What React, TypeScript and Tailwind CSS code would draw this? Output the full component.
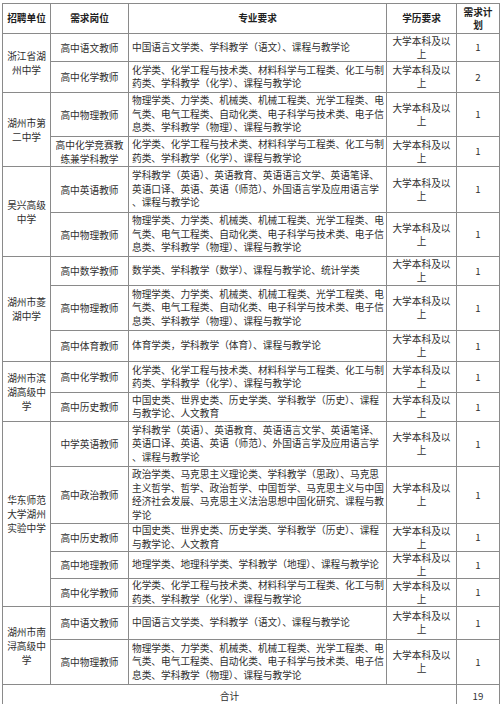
import React from 'react';

// 重复使用的专业要求
const HUAXUE = ['化学类、化学工程与技术类、材料科学与工程类、化工与制', '药类、学科教学（化学）、课程与教学论'];
const WULI = [
  '物理学类、力学类、机械类、机械工程类、光学工程类、电',
  '气类、电气工程类、自动化类、电子科学与技术类、电子信',
  '息类、学科教学（物理）、课程与教学论',
];
const YINGYU = [
  '学科教学（英语）、英语教育、英语语言文学、英语笔译、',
  '英语口译、英语、英语（师范）、外国语言学及应用语言学',
  '、课程与教学论',
];
const YUWEN = ['中国语言文学类、学科教学（语文）、课程与教学论'];
const LISHI = ['中国史类、世界史类、历史学类、学科教学（历史）、课程', '与教学论、人文教育'];

type Job = {
  post: string[];
  major: string[];
  num: string;
  h: string;
};

type Unit = {
  name: string[];
  jobs: Job[];
};

const units: Unit[] = [
  {
    name: ['浙江省湖', '州中学'],
    jobs: [
      { post: ['高中语文教师'], major: YUWEN, num: '1', h: 'h-[28px]' },
      { post: ['高中化学教师'], major: HUAXUE, num: '2', h: 'h-[31px]' },
    ],
  },
  {
    name: ['湖州市第', '二中学'],
    jobs: [
      { post: ['高中物理教师'], major: WULI, num: '1', h: 'h-[44px]' },
      { post: ['高中化学竞赛教', '练兼学科教学'], major: HUAXUE, num: '1', h: 'h-[30px]' },
    ],
  },
  {
    name: ['吴兴高级', '中学'],
    jobs: [
      { post: ['高中英语教师'], major: YINGYU, num: '1', h: 'h-[46px]' },
      { post: ['高中物理教师'], major: WULI, num: '1', h: 'h-[44px]' },
    ],
  },
  {
    name: ['湖州市菱', '湖中学'],
    jobs: [
      { post: ['高中数学教师'], major: ['数学类、学科教学（数学）、课程与教学论、统计学类'], num: '1', h: 'h-[29px]' },
      { post: ['高中物理教师'], major: WULI, num: '1', h: 'h-[45px]' },
      { post: ['高中体育教师'], major: ['体育学类，学科教学（体育）、课程与教学论'], num: '1', h: 'h-[31px]' },
    ],
  },
  {
    name: ['湖州市滨', '湖高级中', '学'],
    jobs: [
      { post: ['高中化学教师'], major: HUAXUE, num: '1', h: 'h-[31px]' },
      { post: ['高中历史教师'], major: LISHI, num: '1', h: 'h-[29px]' },
    ],
  },
  {
    name: ['华东师范', '大学湖州', '实验中学'],
    jobs: [
      { post: ['中学英语教师'], major: YINGYU, num: '1', h: 'h-[45px]' },
      {
        post: ['高中政治教师'],
        major: [
          '政治学类、马克思主义理论类、学科教学（思政）、马克思',
          '主义哲学、哲学、政治哲学、中国哲学、马克思主义与中国',
          '经济社会发展、马克思主义法治思想中国化研究、课程与教',
          '学论',
        ],
        num: '1',
        h: 'h-[57px]',
      },
      { post: ['高中历史教师'], major: LISHI, num: '1', h: 'h-[26px]' },
      { post: ['高中地理教师'], major: ['地理学类、地理科学类、学科教学（地理）、课程与教学论'], num: '1', h: 'h-[26px]' },
      { post: ['高中化学教师'], major: HUAXUE, num: '1', h: 'h-[28px]' },
    ],
  },
  {
    name: ['湖州市南', '浔高级中', '学'],
    jobs: [
      { post: ['高中语文教师'], major: YUWEN, num: '1', h: 'h-[33px]' },
      { post: ['高中物理教师'], major: WULI, num: '1', h: 'h-[45px]' },
    ],
  },
];

const cell = 'border border-[#8a8a8a] p-0 align-middle';

function Lines({ lines, className }: { lines: string[]; className?: string }) {
  return (
    <>
      {lines.map((l, i) => (
        <div key={i} className={`whitespace-nowrap ${className ?? ''}`}>
          {l}
        </div>
      ))}
    </>
  );
}

export default function App() {
  return (
    <div className="w-[500px] h-[704px] overflow-hidden bg-white font-['Noto_Sans_CJK_SC','Microsoft_YaHei',sans-serif] text-[9.7px] text-[#2f2f2f]">
      <table className="mt-[3px] ml-[2px] w-[497px] table-fixed border-collapse">
        <colgroup>
          <col className="w-[48px]" />
          <col className="w-[78px]" />
          <col className="w-[258px]" />
          <col className="w-[70px]" />
          <col className="w-[43px]" />
        </colgroup>
        <thead>
          <tr className="h-[30px] font-bold text-[#1f1f1f]">
            <th className={`${cell} text-center leading-[13px]`}>招聘单位</th>
            <th className={`${cell} text-center leading-[13px]`}>需求岗位</th>
            <th className={`${cell} text-center leading-[13px]`}>专业要求</th>
            <th className={`${cell} text-center leading-[13px]`}>学历要求</th>
            <th className={`${cell} text-center leading-[13px]`}>
              <Lines lines={['需求计', '划']} />
            </th>
          </tr>
        </thead>
        <tbody>
          {units.map((u) =>
            u.jobs.map((j, i) => (
              <tr key={u.name.join('') + i} className={j.h}>
                {i === 0 && (
                  <td rowSpan={u.jobs.length} className={`${cell} text-center leading-[14px]`}>
                    <Lines lines={u.name} />
                  </td>
                )}
                <td className={`${cell} text-center leading-[14px]`}>
                  <Lines lines={j.post} />
                </td>
                <td className={`${cell} px-[3px] text-left leading-[13.5px]`}>
                  <Lines lines={j.major} />
                </td>
                <td className={`${cell} text-center leading-[13px]`}>
                  <Lines lines={['大学本科及以', '上']} />
                </td>
                <td className={`${cell} text-center`}>{j.num}</td>
              </tr>
            ))
          )}
          <tr className="h-[24px]">
            <td colSpan={4} className={`${cell} text-center`}>
              合计
            </td>
            <td className={`${cell} text-center`}>19</td>
          </tr>
        </tbody>
      </table>
    </div>
  );
}
